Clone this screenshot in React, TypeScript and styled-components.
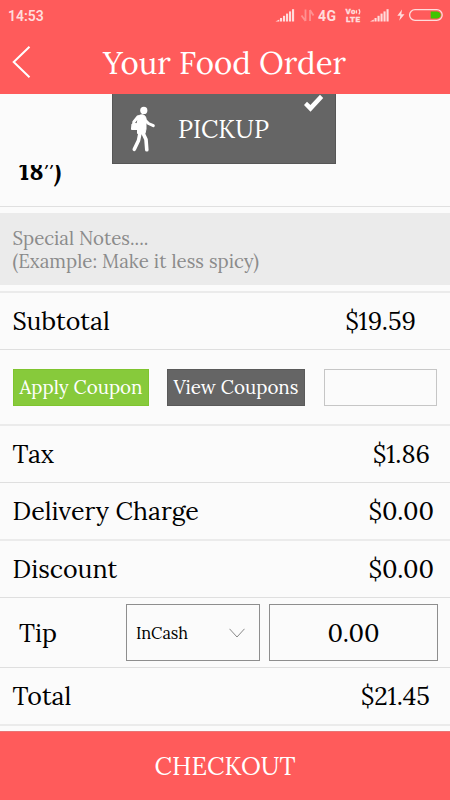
import React from "react";
import styled, { createGlobalStyle } from "styled-components";

const GlobalStyle = createGlobalStyle`
  * { box-sizing: border-box; }
  html, body { margin: 0; background: #fbfbfb; }
  body, button, input, textarea { font-family: Lora, "Liberation Serif", serif; }
`;

const Screen = styled.div`
  width: 450px;
  height: 800px;
  overflow: hidden;
  display: flex;
  flex-direction: column;
  background: #fbfbfb;
  color: #000;
`;

const Header = styled.header`
  height: 94px;
  flex: none;
  background: #ff5b5b;
  color: #fff;
`;

const StatusBar = styled.div`
  height: 31px;
  padding: 0 6px 0 8px;
  display: flex;
  align-items: center;
  justify-content: space-between;
  color: #ffdcdc;
  font-family: Roboto, sans-serif;
  font-size: 14px;
  font-weight: 600;
`;

const StatusIcons = styled.svg`
  width: 172px;
  height: 31px;
  display: block;
`;

const TitleBar = styled.div`
  height: 63px;
  display: grid;
  grid-template-columns: 45px 359px 46px;
  align-items: center;
`;

const BackButton = styled.button`
  padding: 0 0 2px 11px;
  height: 63px;
  border: 0;
  background: none;
  color: #fff;
  svg { display: block; }
`;

const Title = styled.h1`
  margin: 0;
  text-align: center;
  font-size: 31.2px;
  line-height: 62px;
  font-weight: 400;
  white-space: nowrap;
`;

const ModeBar = styled.div`
  height: 71px;
  flex: none;
  display: flex;
  padding-left: 112px;
`;

const PickupTab = styled.button`
  width: 224px;
  height: 70px;
  padding: 0;
  border: 1px solid #565656;
  border-top: 0;
  background: #656565;
  color: #fff;
  display: grid;
  grid-template-columns: 65px 1fr 34px;
  font-size: 24.8px;
  text-align: left;
  line-height: 70px;
  svg { display: block; }
`;

const ItemTail = styled.div`
  height: 42px;
  flex: none;
  overflow: hidden;
  border-bottom: 1px solid #e0e0e0;
  padding-left: 19px;
  display: flex;
  align-items: flex-start;
  font-size: 25px;
  font-weight: 700;
`;

const ItemText = styled.span`
  line-height: 30px;
  margin-top: -9px;
`;

const Notes = styled.div`
  height: 72px;
  flex: none;
  margin-top: 6px;
  padding: 14px 12.5px;
  background: #ebebeb;
  color: #8b8b8b;
  font-size: 18.7px;
  line-height: 23px;
  white-space: pre-line;
`;

const Divider = styled.div`
  height: 8px;
  flex: none;
  border-bottom: 2px solid #ebebeb;
`;

const Row = styled.div<{ $height?: number; $thick?: boolean; $end?: number }>`
  height: ${(p) => p.$height ?? 57}px;
  flex: none;
  padding: 0 ${(p) => p.$end ?? 20}px 0 12.5px;
  display: flex;
  align-items: center;
  justify-content: space-between;
  border-bottom: ${(p) => (p.$thick ? "2px solid #ebebeb" : "1px solid #dfdfdf")};
  font-size: 25px;
  line-height: 32px;
`;

const Label = styled.span`
  white-space: nowrap;
`;

const Amount = styled(Label)``;

const CouponRow = styled(Row)`
  justify-content: flex-start;
  padding: 0 12px 0 13px;
`;

const CouponButton = styled.button<{ $primary?: boolean }>`
  width: ${(p) => (p.$primary ? 136 : 138)}px;
  height: 37px;
  margin-right: ${(p) => (p.$primary ? 18 : 19)}px;
  padding: 0;
  border: 1px solid ${(p) => (p.$primary ? "#7fc42f" : "#5a5a5a")};
  background: ${(p) => (p.$primary ? "#87ca3b" : "#656565")};
  color: #fff;
  font-size: 18.8px;
  line-height: 35px;
  white-space: nowrap;
`;

const CouponInput = styled.input`
  width: 113px;
  height: 37px;
  padding: 0 6px;
  border: 1px solid #c6c6c6;
  background: #fbfbfb;
`;

const TipRow = styled(Row)`
  display: grid;
  grid-template-columns: 107px 134px 168px;
  column-gap: 0;
  padding: 0 12px 0 19px;
  justify-content: start;
`;

const TipSelect = styled.button`
  height: 57px;
  padding: 0 14px 0 9px;
  display: flex;
  align-items: center;
  justify-content: space-between;
  border: 1px solid #8e8e8e;
  background: #fbfbfb;
  color: #000;
  font-size: 16.3px;
`;

const TipAmount = styled.div`
  width: 169px;
  height: 57px;
  margin-left: 9px;
  border: 1px solid #8e8e8e;
  text-align: center;
  font-size: 25px;
  line-height: 56px;
`;

const Checkout = styled.button`
  height: 69px;
  flex: none;
  margin-top: 5px;
  padding: 0;
  border: 0;
  border-top: 1px solid #e87575;
  background: #ff5b5b;
  color: #fff;
  font-size: 25px;
  line-height: 68px;
`;

function Signal({ x }: { x: number }) {
  return (
    <g fill="#ffdcdc">
      <path d={`M${x} 21.5L${x + 3.8} 19.5V21.5Z`} />
      {[0, 1, 2, 3, 4].map((i) => (
        <rect key={i} x={x + 4.5 + i * 3} y={18 - i * 2.2} width="2.1" height={3.5 + i * 2.2} />
      ))}
    </g>
  );
}

function StatusGlyphs() {
  return (
    <StatusIcons viewBox="272 0 172 31">
      <Signal x={275.5} />
      <g stroke="#ff9191" strokeWidth="1.8" fill="none">
        <path d="M305.5 9.5V21M305.5 21L301.5 15.5M310 21V10M310 10L313.5 15.5" />
      </g>
      <text x="318" y="20.7" fill="#ffdcdc" fontFamily="Roboto" fontSize="14" fontWeight="700" textLength="18">4G</text>
      <g fill="#ffdcdc" stroke="#ffdcdc" strokeWidth="0.3" fontFamily="Roboto" fontWeight="900">
        <text x="345.5" y="14.3" fontSize="8" textLength="10">Vo</text>
        <text x="346" y="21.8" fontSize="8" textLength="14">LTE</text>
      </g>
      <path d="M356.5 10.3V13.5M358.8 9.2Q360.8 11.8 358.8 14.4" fill="none" stroke="#ffdcdc" strokeWidth="1.2" />
      <Signal x={370} />
      <path d="M402 9.5L397.3 15.8H400.4L399.2 20.8L404.5 14.2H401.3Z" fill="#ffdcdc" />
      <rect x="409.6" y="9.6" width="32.6" height="10.8" rx="5.4" fill="none" stroke="#ffdcdc" strokeWidth="1.3" />
      <path d="M430.7 11.5H437Q440.7 12.3 440.7 15T437 18.5H430.7Z" fill="#3fc400" />
    </StatusIcons>
  );
}

function Walker() {
  return (
    <svg width="65" height="68" viewBox="0 0 65 68" fill="none" stroke="#fff" strokeLinecap="round" strokeLinejoin="round">
      <circle cx="30.8" cy="16.4" r="3.6" fill="#fff" stroke="none" />
      <path d="M25 22Q31 18.5 33 24V35L32 39.5H24.5V27Z" fill="#fff" strokeWidth="1" />
      <path d="M25 22.8L20.8 28V33M32 26L35.5 29.5L40.3 31.6" strokeWidth="3" />
      <path d="M19.3 30L25 29L26 35.5L18.8 35.5Z" fill="#fff" strokeWidth="1" />
      <path d="M27 39L25.5 46.5L21.3 55.3M30 39L33 45.5L33.8 55.8" strokeWidth="3.6" />
    </svg>
  );
}

export default function App() {
  return (
    <>
      <GlobalStyle />
      <Screen>
        <Header>
          <StatusBar>
            <span>14:53</span>
            <StatusGlyphs />
          </StatusBar>
          <TitleBar>
            <BackButton aria-label="Back">
              <svg width="22" height="34" viewBox="0 0 22 34" fill="none" stroke="#fff" strokeWidth="2">
                <path d="M18.5 1.7L2.7 17L18.5 32.3" />
              </svg>
            </BackButton>
            <Title>Your Food Order</Title>
          </TitleBar>
        </Header>
        <ModeBar>
          <PickupTab>
            <Walker />
            <span>PICKUP</span>
            <svg width="34" height="30" viewBox="0 0 34 30" fill="#fff">
              <path d="M3 11L6 7.7L9.4 11.1L19 .8L22.2 4L9.5 17.8Z" />
            </svg>
          </PickupTab>
        </ModeBar>
        <ItemTail><ItemText>18”)</ItemText></ItemTail>
        <Notes>{"Special Notes....\n(Example: Make it less spicy)"}</Notes>
        <Divider />
        <Row $end={34}>
          <Label>Subtotal</Label>
          <Amount>$19.59</Amount>
        </Row>
        <CouponRow $height={76} $thick>
          <CouponButton $primary>Apply Coupon</CouponButton>
          <CouponButton>View Coupons</CouponButton>
          <CouponInput aria-label="Coupon code" />
        </CouponRow>
        <Row>
          <Label>Tax</Label>
          <Amount>$1.86</Amount>
        </Row>
        <Row $height={58} $thick $end={16}>
          <Label>Delivery Charge</Label>
          <Amount>$0.00</Amount>
        </Row>
        <Row $end={16}>
          <Label>Discount</Label>
          <Amount>$0.00</Amount>
        </Row>
        <TipRow $height={70}>
          <Label>Tip</Label>
          <TipSelect>
            InCash
            <svg width="16" height="10" viewBox="0 0 16 10" fill="none" stroke="#888" strokeWidth="1">
              <path d="M.5 .8L8 9L15.5 .8" />
            </svg>
          </TipSelect>
          <TipAmount>0.00</TipAmount>
        </TipRow>
        <Row $height={58} $thick>
          <Label>Total</Label>
          <Amount>$21.45</Amount>
        </Row>
        <Checkout>CHECKOUT</Checkout>
      </Screen>
    </>
  );
}
